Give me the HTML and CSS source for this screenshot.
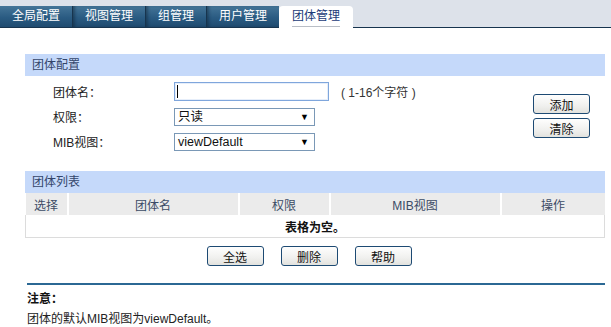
FILE: index.html
```html
<!DOCTYPE html>
<html lang="zh-CN">
<head>
    <meta charset="utf-8">
    <title>团体管理</title>
    <link rel="stylesheet" href="styles.css">
</head>
<body>
    <div class="tabbar">
        <a class="tab first">全局配置</a>
        <a class="tab">视图管理</a>
        <a class="tab">组管理</a>
        <a class="tab">用户管理</a>
        <a class="tab active"><span>团体管理</span></a>
    </div>

    <div class="content">
        <div class="panel">
            <div class="panel-title">团体配置</div>
            <div class="config">
                <div class="form">
                    <div class="row">
                        <label>团体名：</label>
                        <div class="textbox"><span class="caret"></span></div>
                        <span class="hint">( 1-16个字符 )</span>
                    </div>
                    <div class="row">
                        <label>权限：</label>
                        <div class="select">只读<span class="arrow">▼</span></div>
                    </div>
                    <div class="row">
                        <label>MIB视图：</label>
                        <div class="select">viewDefault<span class="arrow">▼</span></div>
                    </div>
                </div>
                <div class="side-buttons">
                    <button class="btn">添加</button>
                    <button class="btn">清除</button>
                </div>
            </div>
        </div>

        <div class="panel list">
            <div class="panel-title">团体列表</div>
            <table class="grid">
                <thead>
                    <tr>
                        <th class="c-sel">选择</th>
                        <th class="c-name">团体名</th>
                        <th class="c-perm">权限</th>
                        <th class="c-mib">MIB视图</th>
                        <th class="c-op">操作</th>
                    </tr>
                </thead>
                <tbody>
                    <tr>
                        <td class="empty" colspan="5">表格为空。</td>
                    </tr>
                </tbody>
            </table>
            <div class="actions">
                <button class="btn">全选</button>
                <button class="btn">删除</button>
                <button class="btn">帮助</button>
            </div>
        </div>

        <div class="note">
            <div class="note-title">注意：</div>
            <div class="note-text">团体的默认MIB视图为viewDefault。</div>
        </div>
    </div>
</body>
</html>
```

FILE: styles.css
```css
body {
    margin: 0;
    padding: 0;
    font-family: "Liberation Sans", "Noto Sans CJK SC", sans-serif;
    font-size: 12px;
    color: #222;
    background-color: #fff;
}

/* tab bar */
.tabbar {
    display: flex;
    align-items: flex-end;
    height: 27px;
    background-color: #dde2ea;
    border-bottom: 1px solid #17344e;
}

.tab {
    display: block;
    height: 21px;
    line-height: 21px;
    padding: 0 12px;
    color: #fff;
    font-size: 12px;
    background: linear-gradient(#457598, #2a5b82 55%, #1f4b70);
    border-left: 1px solid #17344e;
    box-shadow: inset 3px 0 3px -1px rgba(10, 30, 50, 0.45);
}

.tab.first {
    border-left: none;
    box-shadow: none;
}

.tab.active {
    height: 22px;
    margin-bottom: -1px;
    padding: 0 13px;
    color: #1b3b78;
    background: #fff;
    border-left: none;
    border-radius: 4px 4px 0 0;
    box-shadow: none;
}

.tab.active span {
    display: inline-block;
    line-height: 20px;
    border-bottom: 1px solid #b9bec6;
}

/* content */
.content {
    padding: 26px 6px 0 25px;
}

.panel-title {
    height: 22px;
    line-height: 22px;
    padding-left: 7px;
    background-color: #c5d9fa;
    color: #34466a;
}

.config {
    display: flex;
    padding: 3px 15px 0 28px;
}

.form {
    flex: 1;
}

.row {
    display: flex;
    align-items: center;
    height: 25px;
}

.row label {
    width: 121px;
}

.textbox {
    width: 151px;
    height: 17px;
    border: 1px solid #7fa6dc;
    box-shadow: inset 0 0 0 1px #e6eefa;
    display: flex;
    align-items: center;
    padding-left: 2px;
}

.caret {
    width: 1px;
    height: 13px;
    background-color: #000;
}

.hint {
    margin-left: 12px;
    color: #333;
}

.select {
    position: relative;
    width: 136px;
    height: 16px;
    line-height: 16px;
    padding-left: 3px;
    border: 1px solid #7a98b6;
    color: #111;
    font-size: 12.5px;
}

.select .arrow {
    position: absolute;
    right: 5px;
    top: 0;
    font-size: 9px;
    color: #000;
}

.side-buttons {
    display: flex;
    flex-direction: column;
    gap: 4px;
    padding-top: 15px;
}

.btn {
    width: 57px;
    height: 20px;
    padding: 0;
    font-family: "Liberation Sans", "Noto Sans CJK SC", sans-serif;
    font-size: 12px;
    color: #111;
    border: 1px solid #1d4a73;
    border-radius: 3px;
    background: linear-gradient(#fefefe, #f0f0ee 60%, #e2e2de);
}

/* list */
.list {
    margin-top: 17px;
}

.grid {
    width: 100%;
    border-collapse: collapse;
    table-layout: fixed;
}

.grid th {
    height: 22px;
    padding: 0;
    font-weight: normal;
    color: #3c4b66;
    background-color: #ebebeb;
    border-left: 2px solid #fff;
}

.grid th.c-sel {
    border-left: none;
    width: 41px;
}

.grid th.c-name { width: 169px; }
.grid th.c-perm { width: 89px; }
.grid th.c-mib { width: 169px; }

.grid td.empty {
    height: 20px;
    text-align: center;
    font-weight: bold;
    color: #111;
    border: 1px solid #dcdcdc;
    border-top: none;
}

.actions {
    display: flex;
    justify-content: center;
    gap: 17px;
    padding: 8px 12px 0 0;
}

/* note */
.note {
    margin: 17px 0 0 2px;
    border-top: 2px solid #2b6894;
    padding-top: 5px;
}

.note-title {
    font-weight: bold;
    color: #111;
    line-height: 18px;
}

.note-text {
    margin-top: 3px;
    line-height: 17px;
    color: #222;
}
```
